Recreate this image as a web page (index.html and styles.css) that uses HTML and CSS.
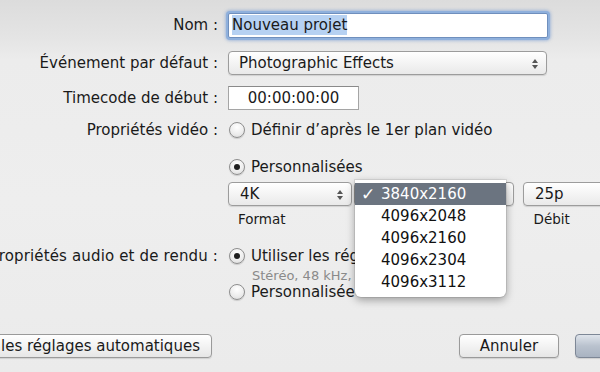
FILE: index.html
```html
<!DOCTYPE html>
<html lang="fr">
<head>
    <meta charset="UTF-8">
    <title>Nouveau projet</title>
    <link rel="stylesheet" href="styles.css">
</head>
<body>
    <div class="sheet">
        <div class="row row-name">
            <label class="label">Nom :</label>
            <div class="field focus"><span class="sel">Nouveau projet</span></div>
        </div>
        <div class="row row-event">
            <label class="label">Événement par défaut :</label>
            <div class="popup wide">Photographic Effects<span class="arrows"></span></div>
        </div>
        <div class="row row-tc">
            <label class="label">Timecode de début :</label>
            <div class="field tc">00:00:00:00</div>
        </div>
        <div class="row row-video">
            <label class="label">Propriétés vidéo :</label>
            <span class="radio"></span><span class="opt">Définir d’après le 1er plan vidéo</span>
        </div>
        <div class="row row-custom">
            <span class="label"></span>
            <span class="radio on"></span><span class="opt">Personnalisées</span>
        </div>
        <div class="row row-format">
            <span class="label"></span>
            <div class="popup fmt">4K<span class="arrows"></span></div>
            <div class="popup res"><span class="arrows"></span></div>
            <div class="popup rate">25p<span class="arrows"></span></div>
        </div>
        <div class="row row-caps">
            <span class="label"></span>
            <span class="cap cap-fmt">Format</span>
            <span class="cap cap-rate">Débit</span>
        </div>
        <div class="row row-audio">
            <label class="label">Propriétés audio et de rendu :</label>
            <span class="radio on"></span><span class="opt clip">Utiliser les réglages par défaut</span>
        </div>
        <div class="row row-sub">
            <span class="label"></span>
            <span class="sub clip">Stéréo, 48 kHz, ProRes 422</span>
        </div>
        <div class="row row-custom2">
            <span class="label"></span>
            <span class="radio"></span><span class="opt clip">Personnalisées</span>
        </div>
        <div class="row row-buttons">
            <button class="btn auto">les réglages automatiques</button>
            <button class="btn cancel">Annuler</button>
            <button class="btn ok"></button>
        </div>

        <ul class="menu">
            <li class="current"><span class="check">✓</span>3840x2160</li>
            <li>4096x2048</li>
            <li>4096x2160</li>
            <li>4096x2304</li>
            <li>4096x3112</li>
        </ul>
    </div>
</body>
</html>
```

FILE: styles.css
```css
html, body {
    margin: 0;
    height: 100%;
    overflow: hidden;
}

body {
    background: linear-gradient(#dcdcdc 0, #e4e4e4 36px, #ececec 60px, #eeeeee 200px, #ebebeb 372px);
    font-family: "DejaVu Sans", "Lucida Grande", sans-serif;
    font-size: 15px;
    color: #1a1a1a;
}

.sheet {
    position: relative;
    width: 600px;
    height: 372px;
    padding-top: 12px;
    box-sizing: border-box;
    overflow: hidden;
}

.row {
    display: flex;
    align-items: center;
    white-space: nowrap;
}

.row > * {
    flex-shrink: 0;
}

.label {
    width: 218px;
    margin-right: 10px;
    display: flex;
    justify-content: flex-end;
}

.row-audio .label {
    letter-spacing: 0.15px;
}

.row-name { height: 26px; }
.row-event { height: 24px; margin-top: 13px; }
.row-tc { height: 25px; margin-top: 10px; }
.row-video { height: 20px; margin-top: 10px; }
.row-custom { height: 20px; margin-top: 17px; }
.row-format { height: 26px; margin-top: 4px; }
.row-caps { height: 16px; margin-top: 4px; font-size: 13.5px; }
.row-audio { height: 20px; margin-top: 19px; }
.row-sub { height: 14px; margin-top: 2px; }
.row-custom2 { height: 20px; margin-top: 0; }
.row-buttons { height: 24px; margin-top: 32px; }

.field {
    box-sizing: border-box;
    height: 24px;
    background: #fff;
    border: 1px solid #a5a5a5;
    border-top-color: #8a8a8a;
    padding: 0 3px;
    line-height: 22px;
}

.field.focus {
    width: 320px;
    height: 25px;
    border-color: #6f8fbd;
    box-shadow: 0 0 0 2px #8fb0dc, 0 0 3px 3px rgba(110, 150, 210, 0.5);
    border-radius: 2px;
}

.sel {
    background: #b6d1f2;
    padding: 1px 0;
}

.field.tc {
    width: 131px;
    text-align: center;
}

.popup {
    position: relative;
    box-sizing: border-box;
    height: 24px;
    line-height: 22px;
    border: 1px solid #9c9c9c;
    border-radius: 4px;
    background: linear-gradient(#ffffff, #f4f4f4 50%, #e9e9e9);
    box-shadow: 0 1px 1px rgba(0, 0, 0, 0.12);
    padding-left: 10px;
}

.popup.wide { width: 319px; }
.popup.fmt { width: 124px; padding-left: 11px; }
.popup.res { width: 160px; margin-left: 2px; }
.popup.rate { width: 100px; margin-left: 9px; padding-left: 11px; }

.arrows {
    position: absolute;
    right: 7px;
    top: 7px;
    width: 7px;
    height: 10px;
}

.arrows::before,
.arrows::after {
    content: "";
    position: absolute;
    left: 0;
    border-left: 3px solid transparent;
    border-right: 3px solid transparent;
}

.arrows::before {
    top: 0;
    border-bottom: 4px solid #555;
}

.arrows::after {
    bottom: 0;
    border-top: 4px solid #555;
}

.radio {
    box-sizing: border-box;
    width: 16px;
    height: 16px;
    margin-left: 1px;
    margin-right: 6px;
    border-radius: 50%;
    border: 1px solid #8e8e8e;
    background: radial-gradient(circle at 50% 30%, #ffffff, #ececec 60%, #d6d6d6);
    box-shadow: 0 1px 1px rgba(0, 0, 0, 0.15);
    display: flex;
    align-items: center;
    justify-content: center;
}

.radio.on::after {
    content: "";
    width: 6px;
    height: 6px;
    border-radius: 50%;
    background: #1f1f1f;
}

.clip {
    overflow: hidden;
}

.row-audio .opt.clip,
.row-custom2 .opt.clip {
    width: 104px;
}

.cap-fmt { margin-left: 10px; }
.cap-rate { margin-left: 248px; }

.sub {
    margin-left: 24px;
    font-size: 13px;
    color: #8a8a8a;
}

.sub.clip {
    width: 103px;
}

.btn {
    box-sizing: border-box;
    height: 24px;
    border: 1px solid #9a9a9a;
    border-radius: 4px;
    background: linear-gradient(#ffffff, #f3f3f3 50%, #e6e6e6);
    box-shadow: 0 1px 1px rgba(0, 0, 0, 0.12);
    font-family: inherit;
    font-size: 15px;
    color: #1a1a1a;
    padding: 0;
}

.btn.auto {
    width: 222px;
    margin-left: -10px;
    text-align: left;
    padding-left: 10px;
}

.btn.cancel {
    width: 100px;
    margin-left: 247px;
}

.btn.ok {
    width: 90px;
    margin-left: 16px;
    border-color: #7d8796;
    background: linear-gradient(#dfe4eb, #b9c2ce 50%, #a9b3c1);
}

.menu {
    position: absolute;
    left: 355px;
    top: 180px;
    width: 151px;
    margin: 0;
    padding: 3px 0 4px;
    list-style: none;
    background: #fff;
    border-radius: 0 0 6px 6px;
    box-shadow: 0 3px 9px rgba(0, 0, 0, 0.35), 0 0 0 1px rgba(0, 0, 0, 0.08);
}

.menu li {
    position: relative;
    height: 22px;
    line-height: 22px;
    padding-left: 26px;
    color: #111;
}

.menu li.current {
    background: #6b7480;
    color: #fff;
}

.check {
    position: absolute;
    left: 6px;
    font-size: 17px;
    font-weight: bold;
}
```
